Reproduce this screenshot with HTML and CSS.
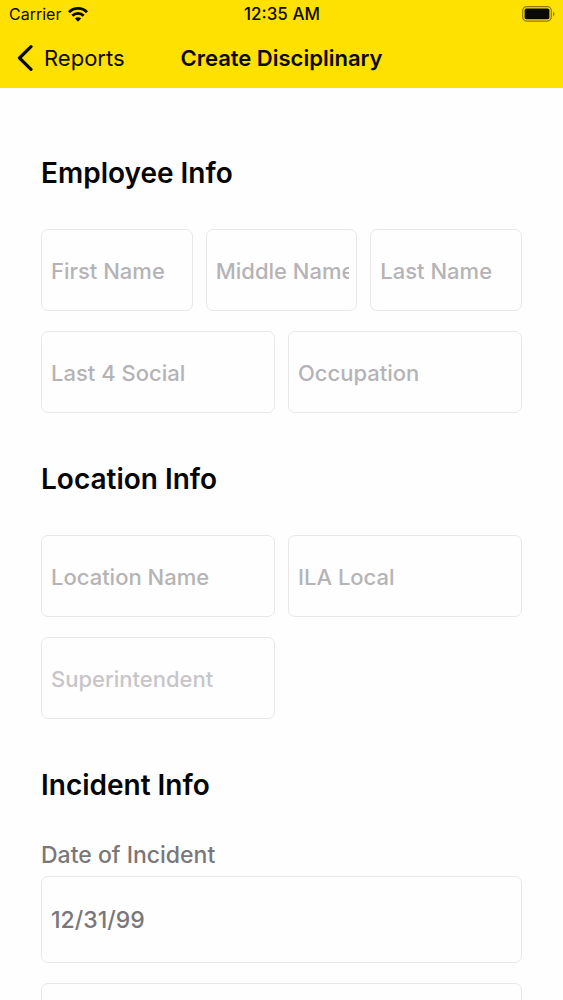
FILE: index.html
```html
<!DOCTYPE html>
<html lang="en">
<head>
<meta charset="utf-8">
<meta name="viewport" content="width=device-width, initial-scale=1">
<title>Create Disciplinary</title>
<link rel="stylesheet" href="styles.css">
</head>
<body>
<div class="app">
  <header class="header">
    <div class="status">
      <div class="carrier">
        <span>Carrier</span>
        <svg class="wifi" viewBox="0 0 20 15" aria-hidden="true">
          <path d="M1 5.2C6 .2 14 .2 19 5.2" fill="none" stroke="currentColor" stroke-width="2.8"/>
          <path d="M4.3 8.8C7.6 5.6 12.4 5.6 15.7 8.8" fill="none" stroke="currentColor" stroke-width="2.7"/>
          <path d="M6.9 11.5C8.7 9.8 11.3 9.8 13.1 11.5L10 14.8Z" fill="currentColor"/>
        </svg>
      </div>
      <time class="clock">12:35 AM</time>
      <svg class="battery" viewBox="0 0 33 16" aria-hidden="true">
        <rect x=".7" y=".7" width="28.6" height="14.4" rx="4" fill="none" stroke="#8b7c00" stroke-width="1.2"/>
        <rect x="2.6" y="2.6" width="24.8" height="10.6" rx="1.6" fill="#0b0a00"/>
        <path d="M31 5.4C33 6.2 33 9.6 31 10.4Z" fill="#8b7c00"/>
      </svg>
    </div>
    <nav class="navbar">
      <button class="back" type="button">
        <svg class="chevron" viewBox="0 0 16 26" aria-hidden="true">
          <path d="M14 1.7 2.5 13 14 24.3" fill="none" stroke="currentColor" stroke-width="3.2" stroke-linecap="round" stroke-linejoin="round"/>
        </svg>
        <span>Reports</span>
      </button>
      <h1 class="title">Create Disciplinary</h1>
    </nav>
  </header>
  <main class="content">
    <form class="form">
      <section class="section">
        <h2 class="heading">Employee Info</h2>
        <div class="rows">
          <div class="row thirds">
            <input class="field" type="text" placeholder="First Name" aria-label="First Name">
            <input class="field" type="text" placeholder="Middle Name" aria-label="Middle Name">
            <input class="field" type="text" placeholder="Last Name" aria-label="Last Name">
          </div>
          <div class="row halves">
            <input class="field" type="text" placeholder="Last 4 Social" aria-label="Last 4 Social">
            <input class="field" type="text" placeholder="Occupation" aria-label="Occupation">
          </div>
        </div>
      </section>
      <section class="section">
        <h2 class="heading">Location Info</h2>
        <div class="rows">
          <div class="row halves">
            <input class="field" type="text" placeholder="Location Name" aria-label="Location Name">
            <input class="field" type="text" placeholder="ILA Local" aria-label="ILA Local">
          </div>
          <div class="row halves">
            <input class="field light" type="text" placeholder="Superintendent" aria-label="Superintendent">
          </div>
        </div>
      </section>
      <section class="section">
        <h2 class="heading">Incident Info</h2>
        <label class="label" for="incident-date">Date of Incident</label>
        <div class="rows">
          <input class="field tall" id="incident-date" type="text" value="12/31/99">
          <input class="field tall" type="text" aria-label="Incident details">
        </div>
      </section>
    </form>
  </main>
</div>
</body>
</html>
```
FILE: styles.css
```css
* {
  box-sizing: border-box;
}

body {
  margin: 0;
  background: #fefefe;
  color: #050505;
  font-family: Inter, "Liberation Sans", sans-serif;
}

.app {
  display: flex;
  flex-direction: column;
  height: 100vh;
}

.header {
  flex: none;
  background: #ffe100;
  color: #0b0a00;
}

.status {
  display: grid;
  grid-template-columns: 1fr auto 1fr;
  align-items: center;
  height: 28px;
  padding: 0 8px 0 9px;
  font-size: 16px;
}

.carrier {
  display: flex;
  align-items: center;
  gap: 7px;
}

.wifi {
  width: 20px;
  height: 15px;
}

.clock {
  font-size: 17px;
  font-weight: 500;
}

.battery {
  justify-self: end;
  width: 33px;
  height: 16px;
}

.navbar {
  display: grid;
  grid-template-columns: 1fr auto 1fr;
  align-items: center;
  height: 60px;
  padding: 0 17px;
}

.back {
  display: flex;
  align-items: center;
  justify-self: start;
  gap: 11px;
  padding: 0;
  border: 0;
  background: none;
  color: inherit;
  font: inherit;
  font-size: 22px;
}

.chevron {
  width: 16px;
  height: 26px;
}

.title {
  margin: 0;
  font-size: 22px;
  font-weight: 600;
  white-space: nowrap;
}

.content {
  flex: 1;
  min-height: 0;
  overflow-y: auto;
  scrollbar-width: none;
}

.form {
  display: flex;
  flex-direction: column;
  gap: 49px;
  padding: 68px 41px;
}

.heading {
  margin: 0 0 39px;
  font-size: 28px;
  font-weight: 600;
  line-height: 34px;
}

.rows {
  display: grid;
  gap: 20px;
}

.row {
  display: grid;
  gap: 13px;
}

.thirds {
  grid-template-columns: repeat(3, minmax(0, 1fr));
}

.halves {
  grid-template-columns: repeat(2, minmax(0, 1fr));
}

.field {
  width: 100%;
  height: 82px;
  padding: 2px 7px 0 9px;
  border: 1px solid #e8e8e8;
  border-radius: 7px;
  background: #fefefe;
  color: #79777a;
  font: 500 22px Inter, "Liberation Sans", sans-serif;
}

.field::placeholder {
  color: #b5b3b5;
  opacity: 1;
}

.light::placeholder {
  color: #c7c5c8;
}

.tall {
  height: 87px;
  padding-top: 0;
  font-size: 23px;
}

.label {
  display: block;
  margin-bottom: 7px;
  color: #79777a;
  font-size: 23px;
  font-weight: 500;
  line-height: 28px;
}
```
